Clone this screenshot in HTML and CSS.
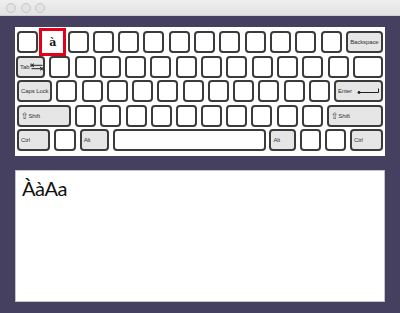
FILE: index.html
```html
<!DOCTYPE html>
<html>
<head>
<meta charset="utf-8">
<link rel="stylesheet" href="styles.css">
</head>
<body>
<div class="titlebar">
  <span class="light"></span><span class="light"></span><span class="light"></span>
</div>
<div class="main">
  <div class="keyboard">
    <div class="row">
      <div class="key"></div>
      <div class="key hl">à</div>
      <div class="key"></div><div class="key"></div><div class="key"></div><div class="key"></div>
      <div class="key"></div><div class="key"></div><div class="key"></div><div class="key"></div>
      <div class="key"></div><div class="key"></div><div class="key"></div>
      <div class="key sp w-bs center">Backspace</div>
    </div>
    <div class="row row2">
      <div class="key sp w-tab">Tab
        <svg class="tabicon" width="14" height="8" viewBox="0 0 14 8"><path d="M1 0.5v3.5M1.5 2.3h11M1.5 2.3l2.5-1.6M1.5 2.3l2.5 1.6M13 4v3.5M1.5 5.7h11M12.5 5.7l-2.5-1.6M12.5 5.7l-2.5 1.6" stroke="#222" stroke-width="1" fill="none"/></svg>
      </div>
      <div class="key"></div><div class="key"></div><div class="key"></div><div class="key"></div>
      <div class="key"></div><div class="key"></div><div class="key"></div><div class="key"></div>
      <div class="key"></div><div class="key"></div><div class="key"></div><div class="key"></div>
      <div class="key w-bsl"></div>
    </div>
    <div class="row">
      <div class="key sp w-caps">Caps Lock</div>
      <div class="key"></div><div class="key"></div><div class="key"></div><div class="key"></div>
      <div class="key"></div><div class="key"></div><div class="key"></div><div class="key"></div>
      <div class="key"></div><div class="key"></div><div class="key"></div>
      <div class="key sp w-enter">Enter
        <svg class="entericon" width="24" height="8" viewBox="0 0 24 8"><circle cx="2" cy="5.5" r="1.4" fill="#222"/><path d="M2 5.5h19.5V1.5" stroke="#222" stroke-width="1" fill="none"/></svg>
      </div>
    </div>
    <div class="row">
      <div class="key sp w-lshift"><span class="arrow">⇧</span>Shift</div>
      <div class="key"></div><div class="key"></div><div class="key"></div><div class="key"></div>
      <div class="key"></div><div class="key"></div><div class="key"></div><div class="key"></div>
      <div class="key"></div><div class="key"></div>
      <div class="key sp w-rshift"><span class="arrow">⇧</span>Shift</div>
    </div>
    <div class="row">
      <div class="key sp w-ctrl">Ctrl</div>
      <div class="key w-22"></div>
      <div class="key sp w-lalt">Alt</div>
      <div class="key w-space"></div>
      <div class="key sp w-ralt">Alt</div>
      <div class="key"></div>
      <div class="key"></div>
      <div class="key sp w-ctrl">Ctrl</div>
    </div>
  </div>
  <div class="textarea">ÀàAa</div>
</div>
</body>
</html>
```

FILE: styles.css
```css
html, body {
  margin: 0;
  padding: 0;
}
body {
  width: 400px;
  height: 313px;
  background: #454060;
  overflow: hidden;
  font-family: "Liberation Sans", Arial, sans-serif;
}
.titlebar {
  height: 16px;
  box-sizing: border-box;
  background: linear-gradient(#efefef, #e2e2e2);
  border-bottom: 1px solid #cfcfcf;
  display: flex;
  align-items: center;
  padding-left: 6px;
  gap: 4.5px;
}
.light {
  width: 10px;
  height: 10px;
  box-sizing: border-box;
  border-radius: 50%;
  border: 1px solid #c6c6c6;
  background: #e3e3e3;
}
.main {
  padding: 11px 15px 0 15px;
  display: flex;
  flex-direction: column;
  gap: 14px;
}
.keyboard {
  background: #fff;
  height: 129px;
  box-sizing: border-box;
  padding: 4px 2px 5px 2px;
  display: flex;
  flex-direction: column;
  gap: 2.5px;
}
.row {
  display: flex;
  justify-content: space-between;
  height: 22px;
}
.row2 {
  margin-left: -1px;
}
.key {
  width: 21px;
  height: 22px;
  box-sizing: border-box;
  border: 2px solid #3b3b3b;
  border-radius: 4px;
  background: #fff;
  font-size: 6px;
  letter-spacing: -0.1px;
  color: #333;
  display: flex;
  align-items: center;
  padding-left: 2px;
  white-space: nowrap;
  overflow: hidden;
}
.key.sp {
  background: #e6e6e6;
}
.key.center {
  justify-content: center;
  padding-left: 0;
}
.key.hl {
  border-color: #fff;
  border-radius: 0;
  box-shadow: 0 0 0 3px #e3001b;
  font-family: "DejaVu Serif", "Liberation Serif", serif;
  font-weight: bold;
  font-size: 11px;
  letter-spacing: 0;
  color: #111;
  justify-content: center;
  padding: 0;
  overflow: visible;
}
.w-bs { width: 37px; }
.w-tab { width: 29px; }
.w-bsl { width: 30px; }
.w-caps { width: 35px; }
.w-enter { width: 49px; }
.w-lshift { width: 54px; }
.w-rshift { width: 56px; }
.w-ctrl { width: 33px; }
.w-22 { width: 22px; }
.w-lalt { width: 29px; }
.w-space { width: 153px; }
.w-ralt { width: 27px; }
.tabicon {
  margin-left: 1px;
  flex: none;
}
.entericon {
  margin-left: 5px;
  flex: none;
}
.arrow {
  font-family: "DejaVu Sans", sans-serif;
  font-size: 9px;
}
.textarea {
  height: 132px;
  box-sizing: border-box;
  background: #fff;
  border: 1px solid #c4c4c4;
  padding: 4px 6px;
  font-family: Lato, "Open Sans", sans-serif;
  font-size: 20px;
  letter-spacing: -0.5px;
  color: #111;
  line-height: 26px;
}
```
